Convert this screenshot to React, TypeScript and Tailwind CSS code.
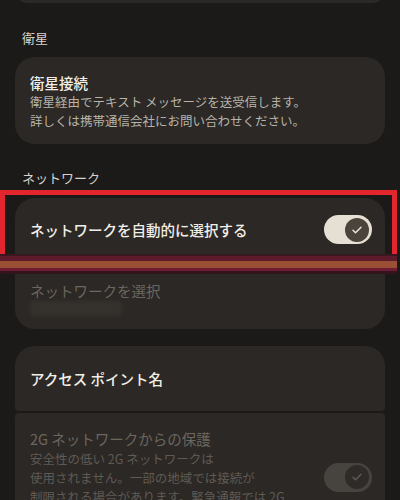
import React from "react";

const Check = ({ color }: { color: string }) => (
  <svg width="12" height="12" viewBox="0 0 24 24" fill="none">
    <path
      d="M4 12.5l5 5L20 6.5"
      stroke={color}
      strokeWidth="3"
      strokeLinecap="round"
      strokeLinejoin="round"
    />
  </svg>
);

const Toggle = ({ disabled = false }: { disabled?: boolean }) => (
  <div
    className={
      disabled
        ? "flex items-center justify-end w-[48px] h-[29px] rounded-full bg-[#47433e] pr-[3px] shrink-0"
        : "flex items-center justify-end w-[48px] h-[29px] rounded-full bg-[#e6dfd3] pr-[3px] shrink-0"
    }
  >
    <div
      className={
        disabled
          ? "flex items-center justify-center w-[24px] h-[24px] rounded-full bg-[#2e2b28]"
          : "flex items-center justify-center w-[24px] h-[24px] rounded-full bg-[#4a443c]"
      }
    >
      <Check color={disabled ? "#5e5953" : "#ebe4d8"} />
    </div>
  </div>
);

export default function App() {
  return (
    <div className="relative w-[400px] h-[500px] overflow-hidden bg-[#1c1a18] font-['Noto_Sans_CJK_JP','Noto_Sans',sans-serif]">
      {/* previous card, scrolled off */}
      <div className="mx-[15px] mt-[-21px] h-[24px] rounded-[20px] bg-[#2b2825]" />

      <div className="mt-[25px] pl-[22px] text-[13px] leading-[20px] text-[#d8d2ca]">
        衛星
      </div>

      <div className="mx-[15px] mt-[9px] rounded-[20px] bg-[#2b2825] pl-[15px] pt-[17px] pb-[14px]">
        <div className="text-[14.5px] leading-[18px] font-medium text-[#f2eee8]">
          衛星接続
        </div>
        <div className="text-[12.5px] leading-[19px] text-[#b9b3aa]">
          衛星経由でテキスト メッセージを送受信します。
          <br />
          詳しくは携帯通信会社にお問い合わせください。
        </div>
      </div>

      <div className="mt-[24px] pl-[22px] text-[13px] leading-[20px] text-[#d8d2ca]">
        ネットワーク
      </div>

      <div className="mx-[15px] mt-[10px] flex flex-col gap-[2px]">
        <div className="flex items-center justify-between h-[63px] rounded-t-[20px] rounded-b-[4px] bg-[#2b2825] pl-[15px] pr-[13px]">
          <span className="text-[14.5px] leading-[20px] font-medium text-[#f2eee8]">
            ネットワークを自動的に選択する
          </span>
          <Toggle />
        </div>
        <div className="rounded-t-[4px] rounded-b-[20px] bg-[#2b2825] pl-[15px] pt-[18px] pb-[13px]">
          <div className="text-[14.5px] leading-[20px] text-[#6b665f]">
            ネットワークを選択
          </div>
          <div className="w-[92px] h-[15px] rounded-[4px] bg-[#35322e] blur-[2px]" />
        </div>
      </div>

      <div className="mx-[15px] mt-[17px] flex flex-col gap-[2px]">
        <div className="flex items-center h-[65px] rounded-t-[20px] rounded-b-[4px] bg-[#2b2825] pl-[15px]">
          <span className="text-[14.5px] leading-[20px] font-medium text-[#f2eee8]">
            アクセス ポイント名
          </span>
        </div>
        <div className="flex items-center justify-between rounded-t-[4px] rounded-b-[20px] bg-[#2b2825] pl-[15px] pr-[13px] pt-[16px] pb-[28px]">
          <div>
            <div className="text-[14.5px] leading-[20px] text-[#6b665f]">
              2G ネットワークからの保護
            </div>
            <div className="text-[12.5px] leading-[19px] text-[#5f5a54]">
              安全性の低い 2G ネットワークは
              <br />
              使用されません。一部の地域では接続が
              <br />
              制限される場合があります。緊急通報では 2G
              <br />
              接続が常に許可されます。
            </div>
          </div>
          <Toggle disabled />
        </div>
      </div>

      {/* red highlight frame */}
      <div className="absolute left-0 top-[190px] w-[397px] h-[64px] border-[5px] border-b-0 border-[#e3262d]" />
      <div className="absolute left-0 top-[254px] w-[397px] flex flex-col">
        <div className="h-[2px] bg-[#3a1820]" />
        <div className="h-[5px] bg-[#5c1a2a]" />
        <div className="h-[7px] bg-[#9a5034]" />
        <div className="h-[3px] bg-[#6e1c34]" />
        <div className="h-[3px] bg-[#33141c]" />
      </div>
    </div>
  );
}
